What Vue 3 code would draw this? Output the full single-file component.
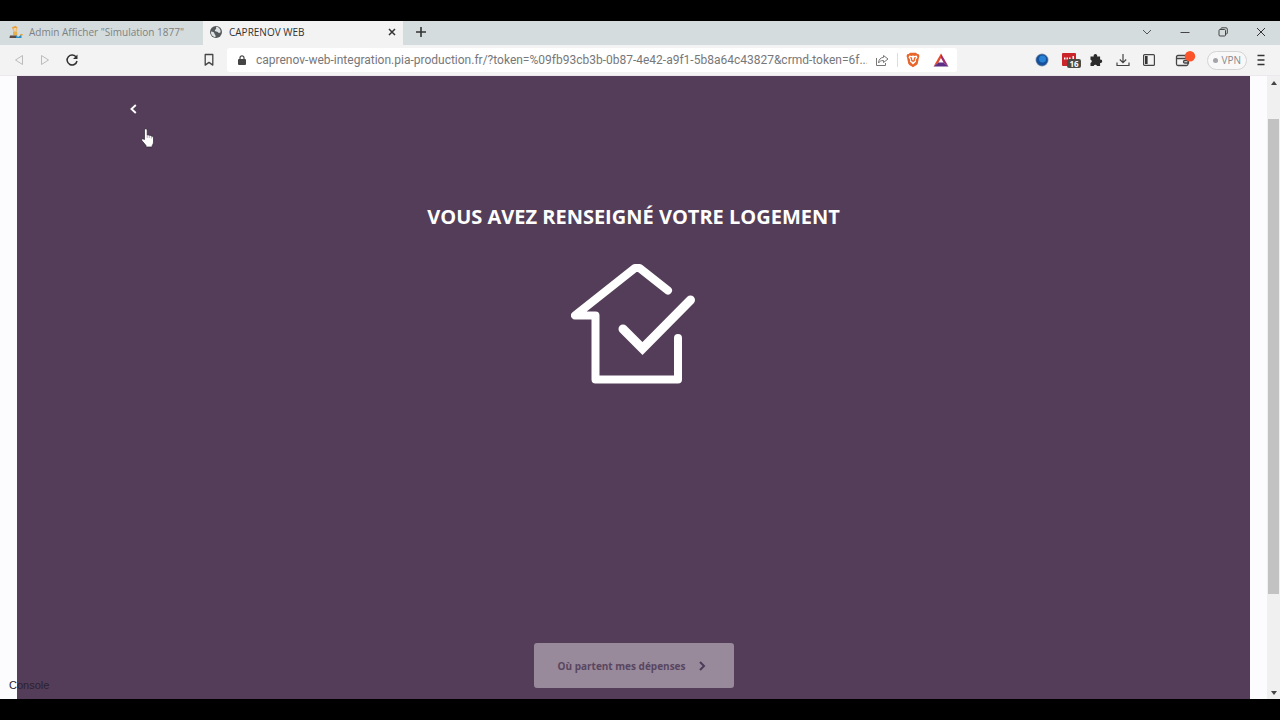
<script setup>
import { ref } from 'vue'

const url = ref('caprenov-web-integration.pia-production.fr/?token=%09fb93cb3b-0b87-4e42-a9f1-5b8a64c43827&crmd-token=6f...')
</script>

<template>
  <div class="browser">
    <header class="tab-bar">
      <div class="tab">
        <svg class="tab-icon" viewBox="0 0 14 14">
          <path d="M3 2.2 6.5.8l2 1.8-.8 3.6H4.4z" fill="#e9a23b" />
          <path d="M4.5 3h3v3h-3z" fill="#f3cfa5" />
          <path d="M4 6.5h4l.5 4H4z" fill="#e8b04c" />
          <path d="M1 10.500h6.500V13H.5z" fill="#5b4a45" />
          <path d="m7 10 2 2 3.5-2.5V13H7z" fill="#2d8fc4" />
          <path d="M11 9h3L12.500 12z" fill="#e9a23b" />
        </svg>
        <span class="tab-title">Admin Afficher "Simulation 1877"</span>
      </div>
      <div class="tab active">
        <svg class="tab-icon" viewBox="0 0 14 14">
          <circle cx="7" cy="7" r="6" fill="#55595c" />
          <path d="M2 6.5c2 .2 3 .6 3.4 2 .3 1.200 1.300 1 1.200 3.500C3.500 12 1.800 9.500 2 6.500zM7.200 1.800c-.7 1.300.6 1.500-.4 2.500-1 .7-1.300 1.300-.5 1.900 1.100.5 2.600.1 3 1.300.3 1 1.500.5 2.300-.2.400-2.500-1.500-5.300-4.400-5.500z" fill="#dfe3e4" />
        </svg>
        <span class="tab-title">CAPRENOV WEB</span>
        <button class="icon-btn" aria-label="Fermer l'onglet">
          <svg width="8" height="8" viewBox="0 0 8 8"><path d="m1 1 6 6M7 1 1 7" stroke="#333" stroke-width="1.500" /></svg>
        </button>
      </div>
      <button class="icon-btn new-tab" aria-label="Nouvel onglet">
        <svg width="12" height="12" viewBox="0 0 12 12"><path d="M6 1v10M1 6h10" stroke="#333" stroke-width="1.600" /></svg>
      </button>
      <div class="window-controls">
        <button class="icon-btn" aria-label="Rechercher les onglets">
          <svg width="10" height="10" viewBox="0 0 10 10"><path d="m1 3 4 4 4-4" fill="none" stroke="#555" /></svg>
        </button>
        <button class="icon-btn" aria-label="Réduire">
          <svg width="10" height="10" viewBox="0 0 10 10"><path d="M.5 5.500h9" stroke="#444" /></svg>
        </button>
        <button class="icon-btn" aria-label="Restaurer">
          <svg width="10" height="10" viewBox="0 0 10 10" fill="none" stroke="#444"><rect x="1" y="2.500" width="6.500" height="6.500" rx="1" /><path d="M3 2.500V1.500q0-.7.800-.7H8q1.300 0 1.300 1.300v4q0 .8-.8.800h-1" /></svg>
        </button>
        <button class="icon-btn" aria-label="Fermer">
          <svg width="10" height="10" viewBox="0 0 10 10"><path d="m1 1 8 8M9 1 1 9" stroke="#333" /></svg>
        </button>
      </div>
    </header>

    <nav class="toolbar">
      <div class="history">
        <button class="icon-btn" aria-label="Précédent" disabled>
          <svg width="12" height="12" viewBox="0 0 12 12"><path d="M9.500 1.500v9L2.500 6z" fill="none" stroke="#bbb" stroke-linejoin="round" /></svg>
        </button>
        <button class="icon-btn" aria-label="Suivant" disabled>
          <svg width="12" height="12" viewBox="0 0 12 12"><path d="M2.500 1.500v9l7-4.500z" fill="none" stroke="#bbb" stroke-linejoin="round" /></svg>
        </button>
        <button class="icon-btn" aria-label="Actualiser">
          <svg width="14" height="14" viewBox="0 0 14 14"><path d="M11.300 4.300A5 5 0 1 0 12 8" fill="none" stroke="#333" stroke-width="1.500" /><path d="M12.500 1.500v4.500H8z" fill="#333" /></svg>
        </button>
      </div>
      <button class="icon-btn bookmark" aria-label="Ajouter aux favoris">
        <svg width="10" height="14" viewBox="0 0 10 14"><path d="M1.200 1.500h7.600v10.600L5 9.400l-3.800 2.700z" fill="none" stroke="#444" stroke-width="1.300" stroke-linejoin="round" /></svg>
      </button>
      <div class="address">
        <svg width="8" height="10" viewBox="0 0 8 10"><rect y="4" width="8" height="6" rx="1" fill="#444" /><path d="M2 4V2.800a2 2 0 0 1 4 0V4" fill="none" stroke="#444" stroke-width="1.200" /></svg>
        <input v-model="url" class="url" type="text" aria-label="Adresse" />
        <button class="icon-btn" aria-label="Partager">
          <svg width="14" height="14" viewBox="0 0 14 14" fill="none" stroke="#777" stroke-linejoin="round"><path d="M1.500 5v7.500h9V10" /><path d="M8.500 2.500 13 6 8.500 9.500V7.500C6 7.500 4.500 8.300 3.500 10c.2-3.300 2-5.500 5-5.600z" /></svg>
        </button>
        <span class="divider"></span>
        <button class="icon-btn" aria-label="Brave Shields">
          <svg width="14" height="16" viewBox="0 0 14 16"><path d="M4 .8h6l1.200 1.300 1.300-.1 1 2-.5 1.500-1.300 6.300q-.3 1-4.700 3.500-4.400-2.500-4.700-3.500L1 5.500.5 4l1-2 1.300.1z" fill="#e8652b" /><path d="m3.500 3.500 2 .4L7 3.500l1.500.4 2-.4 1 1.800L9.700 8l.4 1.500L7 12.500 3.900 9.500 4.300 8 2.500 5.300z" fill="#fff" /><path d="m4 5 2 .5.300 2.200L7 8.500l.7-.8L8 5.500l2-.5-1.200 3L9 9l-2 1-2-1 .2-1z" fill="#e8652b" /></svg>
        </button>
        <button class="icon-btn rewards" aria-label="Brave Rewards">
          <svg width="16" height="14" viewBox="0 0 16 14"><path d="M8 .5.500 13.500l5-4L8 5z" fill="#e34b2c" /><path d="m8 .5 7.500 13-5-4L8 5z" fill="#9e2a72" /><path d="M.5 13.500h15l-5-4h-5z" fill="#5c2d83" /></svg>
        </button>
      </div>
      <div class="extensions">
        <button class="icon-btn" aria-label="Extension">
          <svg width="14" height="14" viewBox="0 0 14 14"><circle cx="7" cy="7" r="6.500" fill="#8c9bab" /><circle cx="7" cy="7" r="5.800" fill="#164f9c" /><circle cx="7.500" cy="6" r="3.500" fill="#2882d3" /></svg>
        </button>
        <button class="icon-btn counter" aria-label="Extension, 16 notifications">
          <svg width="14" height="14" viewBox="0 0 14 14"><rect width="14" height="13" rx="1" fill="#c9252b" /><path d="M2 4.500h1.500v2H2zM4.500 4.500H6v2H4.500zM7 4.500h1.500v2H7zM10.500 3H12v3.500h-1.500z" fill="#fff" /></svg>
          <span class="badge">16</span>
        </button>
        <button class="icon-btn" aria-label="Extensions">
          <svg width="14" height="14" viewBox="0 0 14 14"><path d="M1.500 3.500h3.200a1.800 1.800 0 1 1 3.400 0h3v3.200a1.700 1.700 0 1 1 0 3.300v3H8a1.700 1.700 0 0 0-3.300 0H1.500V10a1.700 1.700 0 0 0 0-3.300z" fill="#2c2c2c" /></svg>
        </button>
        <button class="icon-btn" aria-label="Téléchargements">
          <svg width="14" height="14" viewBox="0 0 14 14" fill="none" stroke="#444" stroke-width="1.200"><path d="M7 1v8.500M3.800 6.500 7 9.700l3.200-3.200M1 9.500v3h12v-3" /></svg>
        </button>
        <button class="icon-btn" aria-label="Panneau latéral">
          <svg width="12" height="12" viewBox="0 0 12 12"><rect x=".6" y=".6" width="10.800" height="10.800" rx="1" fill="none" stroke="#444" stroke-width="1.200" /><path d="M2 2h2.600v8H2z" fill="#333" /></svg>
        </button>
      </div>
      <button class="icon-btn" aria-label="Portefeuille">
        <svg width="22" height="18" viewBox="0 0 22 18"><path d="M12 4.500H4Q2.500 4.500 2.500 6V13q0 1.500 1.500 1.500h8.500q1.500 0 1.500-1.500V7.500H2.500M14.500 9.500H11q-1.500 0-1.500 1.300t1.500 1.200h3.500z" fill="none" stroke="#444" stroke-width="1.300" /><circle cx="16" cy="5.200" r="5.200" fill="#fb542b" /></svg>
      </button>
      <button class="vpn"><span class="dot"></span>VPN</button>
      <button class="icon-btn" aria-label="Menu">
        <svg width="10" height="12" viewBox="0 0 10 12"><path d="M1.500 1.500h7M1.500 6h7M1.500 10.500h7" stroke="#333" stroke-width="1.400" /></svg>
      </button>
    </nav>

    <div class="viewport">
      <main class="panel">
        <button class="icon-btn back" aria-label="Retour">
          <svg width="8" height="10" viewBox="0 0 8 10"><path d="M6.800 1 2.500 5l4.300 4" fill="none" stroke="#fff" stroke-width="1.900" /></svg>
        </button>
        <h1>Vous avez renseigné votre logement</h1>
        <svg class="house" viewBox="0 0 126 122" fill="none" stroke="#fff" stroke-width="8" stroke-linecap="round" stroke-linejoin="round">
          <path d="M97 27.500 68.500 5H64L4 52.500h20.500V116.500H107V75" />
          <path d="m52 66 19.500 19.500L119.500 37" stroke-width="9" stroke-linejoin="miter" />
        </svg>
        <button class="next" disabled>
          Où partent mes dépenses
          <svg width="8" height="10" viewBox="0 0 8 10"><path d="m2 1 4 4-4 4" fill="none" stroke="#4e3c58" stroke-width="2" /></svg>
        </button>
      </main>
      <div class="scrollbar">
        <svg width="6" height="4" viewBox="0 0 6 4"><path d="m0 4 3-4 3 4z" fill="#444" /></svg>
        <div class="track"><div class="thumb"></div></div>
        <svg width="6" height="4" viewBox="0 0 6 4"><path d="m0 0 3 4 3-4z" fill="#444" /></svg>
      </div>
      <span class="console">Console</span>
      <svg class="cursor" width="14" height="20" viewBox="0 0 14 20"><path d="M3.500 11.500V2q0-1.300 1.300-1.300T6.200 2v5q1-.6 2 .4 1.200-.5 2 .6 2.300-.4 2.300 2v4q0 2-1.300 3.500V19H5v-1.500L.800 12.500Q.4 11 1.700 10.700z" fill="#fff" stroke="#2d2333" stroke-width=".7" /><path d="M6.200 7v3M8.300 7.500V10M10.400 8v2.500" stroke="#75677f" stroke-width=".5" /></svg>
    </div>
  </div>
</template>

<style>
body {
  margin: 0;
  background: #000;
}
</style>

<style scoped>
.browser {
  box-sizing: border-box;
  min-height: 100vh;
  padding: 21px 0;
  display: flex;
  flex-direction: column;
  font-family: 'Open Sans', 'Noto Sans', sans-serif;
  background: #000;
}

button {
  font-family: inherit;
}

svg {
  display: block;
  flex-shrink: 0;
}

.icon-btn {
  display: flex;
  align-items: center;
  justify-content: center;
  padding: 0;
  border: 0;
  background: none;
}

.tab-bar {
  display: flex;
  align-items: stretch;
  height: 24px;
  background: #d5dcdd;
}

.tab {
  box-sizing: border-box;
  width: 200px;
  display: flex;
  align-items: center;
  gap: 6px;
  padding: 0 7px 2px 6px;
  font-size: 10px;
  line-height: 16px;
  color: #7c8284;
}

.tab:first-child {
  width: 203px;
  padding-left: 9px;
}

.tab.active {
  background: #f3f3f4;
  color: #333;
}

.tab-icon {
  width: 14px;
  height: 14px;
}

.tab-title {
  flex: 1;
  white-space: nowrap;
}

.new-tab {
  width: 36px;
  padding-bottom: 2px;
}

.window-controls {
  display: flex;
  gap: 28px;
  margin-left: auto;
  padding: 0 14px 2px 0;
}

.toolbar {
  box-sizing: border-box;
  display: flex;
  align-items: center;
  height: 31px;
  padding-right: 14px;
  border-bottom: 1px solid #ece8ed;
  background: #f3f3f4;
}

.history {
  display: flex;
  align-items: center;
  gap: 14px;
  padding-left: 13px;
}

.bookmark {
  margin-left: 125px;
  margin-right: 13px;
}

.address {
  flex: 1;
  height: 24px;
  display: flex;
  align-items: center;
  gap: 8px;
  padding: 0 8px 0 11px;
  background: #fff;
  border-radius: 3px;
}

.url {
  flex: 1;
  min-width: 0;
  padding: 0 0 0 2px;
  border: 0;
  outline: 0;
  font: 12px/16px Roboto, 'Open Sans', sans-serif;
  color: #77777a;
  background: none;
}

.divider {
  width: 1px;
  height: 14px;
  background: #ddd;
}

.rewards {
  margin-left: 5px;
}

.extensions {
  display: flex;
  align-items: center;
  gap: 13px;
  margin-left: 78px;
  margin-right: 19px;
}

.counter {
  position: relative;
}

.badge {
  position: absolute;
  left: 5px;
  top: 6px;
  padding: 0 2px;
  border-radius: 2px;
  background: #4b4b45;
  color: #fff;
  font-size: 8px;
  line-height: 9px;
  font-weight: 700;
}

.vpn {
  display: flex;
  align-items: center;
  gap: 3px;
  height: 19px;
  margin: 0 9px 0 11px;
  padding: 0 5px;
  border: 1px solid #d4d4d6;
  border-radius: 10px;
  background: #f8f8f8;
  color: #8a8a8c;
  font-size: 10px;
}

.dot {
  width: 5px;
  height: 5px;
  border-radius: 50%;
  background: #a4a4a8;
}

.viewport {
  position: relative;
  flex: 1;
  display: flex;
  gap: 17px;
  padding-left: 17px;
  background: #fcfbfd;
}

.panel {
  flex: 1;
  display: flex;
  flex-direction: column;
  align-items: center;
  padding: 25px 0 11px;
  background: #543d58;
}

.back {
  align-self: flex-start;
  width: 16px;
  height: 16px;
  margin-left: 108px;
}

h1 {
  margin: 86px 0 32px;
  font-size: 20px;
  line-height: 28px;
  font-weight: 700;
  text-transform: uppercase;
  color: #fff;
}

.house {
  width: 126px;
  height: 122px;
}

.next {
  display: flex;
  align-items: center;
  justify-content: center;
  gap: 12px;
  width: 200px;
  height: 45px;
  margin-top: auto;
  padding: 0 4px 0 0;
  border: 0;
  border-radius: 3px;
  background: #98899b;
  color: #584660;
  font-size: 10px;
  font-weight: 700;
}

.scrollbar {
  width: 13px;
  display: flex;
  flex-direction: column;
  align-items: center;
  gap: 6px;
  padding: 5px 0 4px;
  background: #f0f0f1;
}

.track {
  flex: 1;
  width: 11px;
  padding-top: 28px;
}

.thumb {
  height: 84%;
  background: #c2c2c3;
}

.console {
  position: absolute;
  left: 9px;
  bottom: 6px;
  font: 11px/16px 'Liberation Sans', sans-serif;
  color: #2b2230;
}

.cursor {
  position: absolute;
  left: 141px;
  top: 52px;
}
</style>
